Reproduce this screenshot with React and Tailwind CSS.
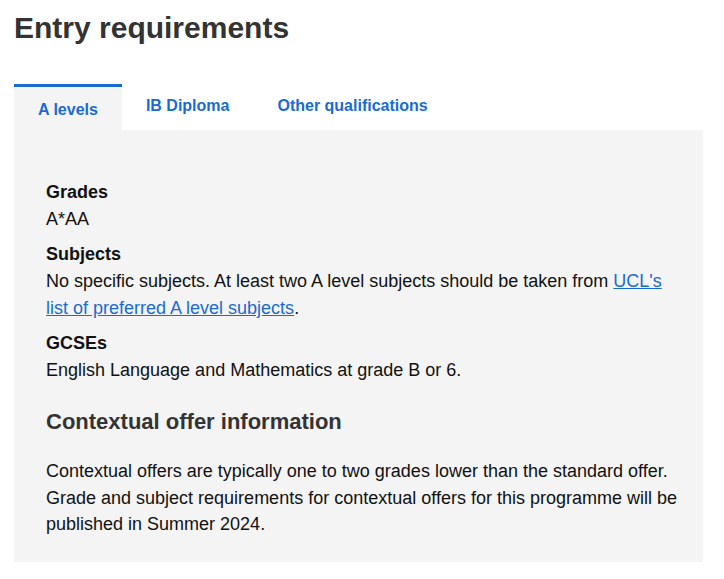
import { useState } from "react";

const tabs = ["A levels", "IB Diploma", "Other qualifications"];

export default function App() {
  const [active, setActive] = useState(0);

  return (
    <div className="min-h-screen bg-white px-[14px] pt-[10px] text-[#111] [font-family:'Liberation_Sans',Arial,sans-serif]">
      <h1 className="text-[30px] font-bold leading-[36px] text-[#333]">Entry requirements</h1>

      <div className="mt-[38px] flex">
        {tabs.map((t, i) => (
          <button
            key={t}
            onClick={() => setActive(i)}
            className={`h-[46px] px-6 text-[16px] font-bold text-[#1a6bd1] ${
              i === active ? "border-t-[3px] border-[#1a6bd1] bg-[#f4f4f4] pt-[2px]" : "pb-[3px]"
            }`}
          >
            {t}
          </button>
        ))}
      </div>

      <div className="w-[689px] bg-[#f4f4f4] pl-8 pr-4 pt-[49px] pb-[24px] text-[18px] leading-[27px]">
        <h3 className="text-[18px] font-bold">Grades</h3>
        <p>A*AA</p>

        <h3 className="mt-2 text-[18px] font-bold">Subjects</h3>
        <p>
          No specific subjects. At least two A level subjects should be taken from{" "}
          <a href="#" className="text-[#1a6bd1] underline">
            UCL's list of preferred A level subjects
          </a>
          .
        </p>

        <h3 className="mt-2 text-[18px] font-bold">GCSEs</h3>
        <p>English Language and Mathematics at grade B or 6.</p>

        <h2 className="mt-[24px] text-[22px] font-bold leading-[27px] text-[#333]">
          Contextual offer information
        </h2>
        <p className="mt-[23px] leading-[26.5px]">
          Contextual offers are typically one to two grades lower than the standard offer. Grade and
          subject requirements for contextual offers for this programme will be published in Summer
          2024.
        </p>
      </div>
    </div>
  );
}
